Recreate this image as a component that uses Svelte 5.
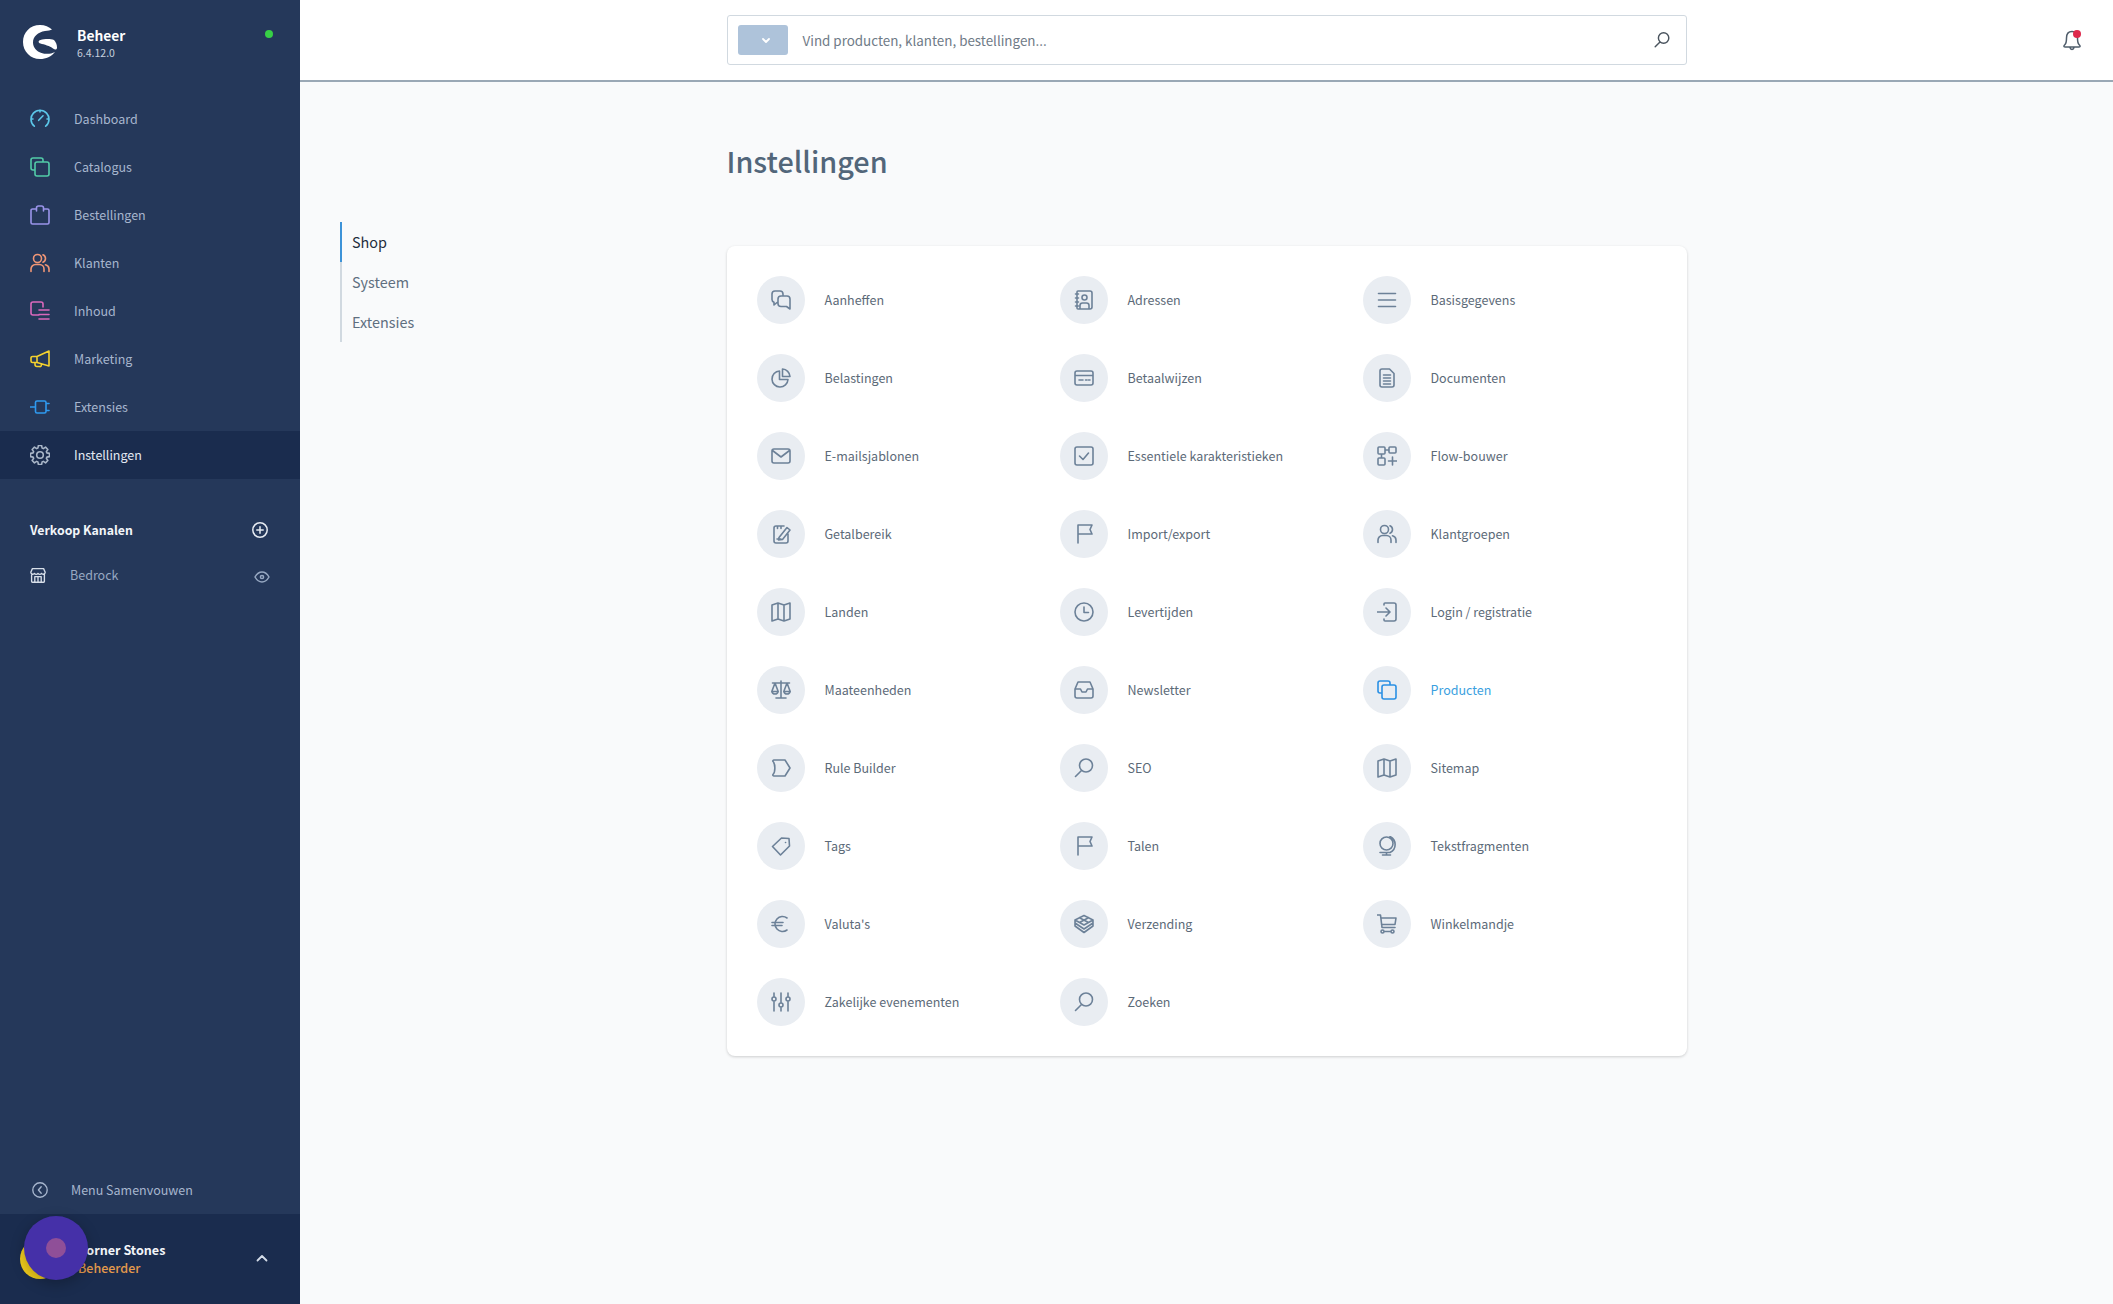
<script>
  // rounded-ish eight tooth gear outline, centre 10,10
  function gearOutline() {
    let d = "";
    for (let i = 0; i < 8; i++) {
      const a = (i * Math.PI) / 4 - Math.PI / 2;
      const pt = (r, off) => `${(10 + r * Math.cos(a + off)).toFixed(2)} ${(10 + r * Math.sin(a + off)).toFixed(2)}`;
      d += `${i === 0 ? "M" : "L"}${pt(7.2, -0.3)}L${pt(9.6, -0.17)}L${pt(9.6, 0.17)}L${pt(7.2, 0.3)}`;
    }
    return d + "zM10 13.300A3.300 3.300 0 1 0 10 6.700A3.300 3.300 0 0 0 10 13.300z";
  }

  const icons = {
    dashboard: "M4.300 17.200A9 9 0 1 1 15.700 17.200M10 1v2M1 10h2M17 10h2M8.700 11.300L13 6.800",
    catalog: "M13 5V3a2 2 0 0 0-2-2H3a2 2 0 0 0-2 2v8a2 2 0 0 0 2 2h2M7 5h10a2 2 0 0 1 2 2v10a2 2 0 0 1-2 2H7a2 2 0 0 1-2-2V7a2 2 0 0 1 2-2z",
    bag: "M6.500 4H2.500A1.500 1.500 0 0 0 1 5.500V17.500A1.500 1.500 0 0 0 2.500 19H17.500A1.500 1.500 0 0 0 19 17.500V5.500A1.500 1.500 0 0 0 17.500 4H13.500M6.500 6V3A2 2 0 0 1 8.500 1H11.500A2 2 0 0 1 13.500 3V6",
    users: "M7.500 9.500A4 4 0 1 0 7.500 1.500A4 4 0 0 0 7.500 9.500zM1 18.500V16A4.500 4.500 0 0 1 5.500 11.500H9.500A4.500 4.500 0 0 1 14 16V18.500M13 1.800A4 4 0 0 1 13 9.200M15.500 11.800A4.500 4.500 0 0 1 19 16V18.500",
    content: "M9 14H3a2 2 0 0 1-2-2V3a2 2 0 0 1 2-2h8a2 2 0 0 1 2 2v3M9 9h10M9 13.500h10M9 18h10",
    megaphone: "M19 2V17L7 13.500H2.500A1.500 1.500 0 0 1 1 12V9A1.500 1.500 0 0 1 2.500 7.500H7zM7 7.500V13.500M5 13.500V15.500A2 2 0 0 0 7 17.500H9.500A1.500 1.500 0 0 0 11 15",
    plug: "M7 4H14.500A1.500 1.500 0 0 1 16 5.500V14.500A1.500 1.500 0 0 1 14.500 16H7A1.500 1.500 0 0 1 5.500 14.500V5.500A1.500 1.500 0 0 1 7 4zM0.500 10H5.500M16 6.500H19M16 13.500H19",
    gear: gearOutline(),
    store: "M2 8V18A1 1 0 0 0 3 19H17A1 1 0 0 0 18 18V8M3 2H17L19 6.500A2.500 2.500 0 0 1 14.500 8A2.800 2.800 0 0 1 10 8A2.800 2.800 0 0 1 5.500 8A2.500 2.500 0 0 1 1 6.500zM6 19V12H14V19M10 12V19",
    plusCircle: "M10 19A9 9 0 1 0 10 1A9 9 0 0 0 10 19zM10 6V14M6 10H14",
    back: "M10 19A9 9 0 1 0 10 1A9 9 0 0 0 10 19zM11.500 6L8 10L11.500 14",
    chat: "M7 12.500H6L3 15V12.300A3 3 0 0 1 1 9.500V4A3 3 0 0 1 4 1H9A3 3 0 0 1 12 4V5M10 6H16A3 3 0 0 1 19 9V19L15.500 16.500H10A3 3 0 0 1 7 13.500V9A3 3 0 0 1 10 6z",
    book: "M4 1H16A2 2 0 0 1 18 3V17A2 2 0 0 1 16 19H4A1 1 0 0 1 3 18V2A1 1 0 0 1 4 1zM1.500 4H4.500M1.500 8H4.500M1.500 12H4.500M1.500 16H4.500M10.500 10A2.500 2.500 0 1 0 10.500 5A2.500 2.500 0 0 0 10.500 10zM6 19V15.500A2.500 2.500 0 0 1 8.500 13H12.500A2.500 2.500 0 0 1 15 15.500V19",
    lines: "M1.500 3.500H18.500M1.500 10H18.500M1.500 16.500H18.500",
    pie: "M8.500 3A8 8 0 1 0 17 11.500H8.500zM11.500 1A8 8 0 0 1 19 8.500H11.500z",
    card: "M3 3H17A2 2 0 0 1 19 5V15A2 2 0 0 1 17 17H3A2 2 0 0 1 1 15V5A2 2 0 0 1 3 3zM1 7.500H19M5 12H9M11.500 12H13M14.500 12H16",
    doc: "M5 1H12.500L17 5.500V17A2 2 0 0 1 15 19H5A2 2 0 0 1 3 17V3A2 2 0 0 1 5 1zM6.500 7H13.500M6.500 10H13.500M6.500 13H13.500M6.500 16H13.500",
    mail: "M3 3H17A2 2 0 0 1 19 5V15A2 2 0 0 1 17 17H3A2 2 0 0 1 1 15V5A2 2 0 0 1 3 3zM1.500 4.500L10 11L18.500 4.500",
    check: "M3 1H17A2 2 0 0 1 19 3V17A2 2 0 0 1 17 19H3A2 2 0 0 1 1 17V3A2 2 0 0 1 3 1zM5.500 10L9 13.500L14.500 7",
    flow: "M2 1H7A1 1 0 0 1 8 2V7A1 1 0 0 1 7 8H2A1 1 0 0 1 1 7V2A1 1 0 0 1 2 1zM13 1H18A1 1 0 0 1 19 2V6A1 1 0 0 1 18 7H13A1 1 0 0 1 12 6V2A1 1 0 0 1 13 1zM2 12H7A1 1 0 0 1 8 13V18A1 1 0 0 1 7 19H2A1 1 0 0 1 1 18V13A1 1 0 0 1 2 12zM8 4H12M4.500 8V12M15.500 11V19M11.500 15H19.500",
    note: "M13 2H5A2 2 0 0 0 3 4V17A2 2 0 0 0 5 19H15A2 2 0 0 0 17 17V10M6.500 2V4.500M10 2V4.500M8 13.500L16 3.500L19 6L11.500 15.500L7.500 16zM6 15H10",
    flag: "M4 19V1H18L16 5.500L18 10H4",
    map: "M1 3L7 1L13 3L19 1V17L13 19L7 17L1 19zM7 1V17M13 3V19",
    clock: "M10 19A9 9 0 1 0 10 1A9 9 0 0 0 10 19zM10 5V10.500H14.500",
    login: "M7 3V2A1 1 0 0 1 8 1H17A2 2 0 0 1 19 3V17A2 2 0 0 1 17 19H8A1 1 0 0 1 7 18V17M0.500 10H12.500M9 6L13 10L9 14",
    scales: "M10 1V18M5 18H15M1.500 3H18.500M4 3L0.800 11.500A3.300 3.300 0 0 0 7.200 11.500zM16 3L12.800 11.500A3.300 3.300 0 0 0 19.200 11.500zM1 11.500H7M13 11.500H19",
    inbox: "M4 2H16L19 9V16A2 2 0 0 1 17 18H3A2 2 0 0 1 1 16V9zM1 9H6.500L8 12H12L13.500 9H19",
    rule: "M3 2H14L19 10L14 18H3C2 18 1.500 17 2 16.500C4.500 14 4.500 6 2 3.500C1.500 3 2 2 3 2z",
    search: "M12 14A6.500 6.500 0 1 0 12 1A6.500 6.500 0 0 0 12 14zM7.500 12.500L1.500 18.500",
    tag: "M10.500 2L18 2.500L18.500 10L9.500 19L1.500 10.500zM14.500 6.500H14.600",
    globe: "M9.500 14A6.500 6.500 0 1 0 9.500 1A6.500 6.500 0 0 0 9.500 14zM13 0.500A8.800 8.800 0 0 1 13 16.500H3M9.500 16.500V19M5.500 19H13.500",
    euro: "M16 4A7.500 7.500 0 1 0 16 16M1 8.500H12M1 11.500H11",
    box: "M10 1.500L19 6V12L10 18.500L1 12V6zM1 6L10 11L19 6M5.500 3.700L14.500 8.500M14.500 3.700L5.500 8.500M1 9L10 15L19 9",
    cart: "M0.500 1H3.500L5 13.500H18M4 4H19L18 10.500H4.500M5.500 19A1.500 1.500 0 1 0 5.500 16A1.500 1.500 0 0 0 5.500 19zM15.500 19A1.500 1.500 0 1 0 15.500 16A1.500 1.500 0 0 0 15.500 19zM7 17.500H14",
    sliders: "M3 1V5M3 9V19M10 1V11M10 15V19M17 1V5M17 9V19M3 9A2 2 0 1 0 3 5A2 2 0 0 0 3 9zM10 15A2 2 0 1 0 10 11A2 2 0 0 0 10 15zM17 9A2 2 0 1 0 17 5A2 2 0 0 0 17 9z"
  };

  const menu = [
    { label: "Dashboard", icon: "dashboard", color: "#5cc8ea" },
    { label: "Catalogus", icon: "catalog", color: "#52cba8" },
    { label: "Bestellingen", icon: "bag", color: "#9a94ea" },
    { label: "Klanten", icon: "users", color: "#f09676" },
    { label: "Inhoud", icon: "content", color: "#da68bc" },
    { label: "Marketing", icon: "megaphone", color: "#f5d22e" },
    { label: "Extensies", icon: "plug", color: "#2f9af0" },
    { label: "Instellingen", icon: "gear", color: "#a9b6c8", active: true }
  ];

  const settings = [
    ["Aanheffen", "chat"], ["Adressen", "book"], ["Basisgegevens", "lines"],
    ["Belastingen", "pie"], ["Betaalwijzen", "card"], ["Documenten", "doc"],
    ["E-mailsjablonen", "mail"], ["Essentiele karakteristieken", "check"], ["Flow-bouwer", "flow"],
    ["Getalbereik", "note"], ["Import/export", "flag"], ["Klantgroepen", "users"],
    ["Landen", "map"], ["Levertijden", "clock"], ["Login / registratie", "login"],
    ["Maateenheden", "scales"], ["Newsletter", "inbox"], ["Producten", "catalog", true],
    ["Rule Builder", "rule"], ["SEO", "search"], ["Sitemap", "map"],
    ["Tags", "tag"], ["Talen", "flag"], ["Tekstfragmenten", "globe"],
    ["Valuta's", "euro"], ["Verzending", "box"], ["Winkelmandje", "cart"],
    ["Zakelijke evenementen", "sliders"], ["Zoeken", "search"]
  ];

  const tabs = ["Shop", "Systeem", "Extensies"];
</script>

<div class="page">
  <aside class="sidebar">
    <div class="brand">
      <svg class="logo" viewBox="0 0 34 34">
        <path d="M29 4.500C26 1.800 22 0 17 0C7 0 0 7.500 0 17C0 26.500 7.500 34 17 34C23 34 28.500 31.500 32 27C28 29 23 29.500 18.500 28C13.500 26.500 10 22.500 10 17.500C10 11.500 15 7 22 6C25 5.600 27.500 5.500 29 4.500zM17.500 15C15 15.500 15 18 17.500 18.500C21 19.500 27 21 30 23.500C32 25 34 25 34 22.500C34 20 33 17 31 15C27 13.500 21 14 17.500 15z"/>
      </svg>
      <div class="brand-text">
        <div class="brand-name">Beheer</div>
        <div class="brand-version">6.4.12.0</div>
      </div>
      <span class="status"></span>
    </div>

    <nav class="menu">
      {#each menu as item}
        <div class="menu-row" class:active={item.active}>
          <svg class="icon" viewBox="0 0 20 20" style="color: {item.color}"><path d={icons[item.icon]} /></svg>
          <span>{item.label}</span>
        </div>
      {/each}
    </nav>

    <div class="channels-head">
      <span>Verkoop Kanalen</span>
      <svg class="small-icon" viewBox="0 0 20 20"><path d={icons.plusCircle} /></svg>
    </div>
    <div class="channel">
      <svg class="small-icon" viewBox="0 0 20 20"><path d={icons.store} /></svg>
      <span class="channel-name">Bedrock</span>
      <svg class="eye" viewBox="0 0 16 12">
        <path d="M1 6C3 2.500 5.500 1 8 1C10.500 1 13 2.500 15 6C13 9.500 10.500 11 8 11C5.500 11 3 9.500 1 6z" />
        <circle cx="8" cy="6" r="1.600" />
      </svg>
    </div>

    <div class="collapse">
      <svg class="small-icon" viewBox="0 0 20 20"><path d={icons.back} /></svg>
      <span>Menu Samenvouwen</span>
    </div>
    <div class="user">
      <span class="avatar"></span>
      <div class="user-text">
        <div class="user-name">Corner Stones</div>
        <div class="user-role">Beheerder</div>
      </div>
      <svg class="caret" viewBox="0 0 12 8"><path d="M1.500 6.500L6 2L10.500 6.500" /></svg>
    </div>
    <div class="blob"><span></span></div>
  </aside>

  <div class="right">
    <header class="topbar">
      <div class="search">
        <span class="search-type">
          <svg viewBox="0 0 10 7"><path d="M2 2L5 5L8 2" /></svg>
        </span>
        <span class="placeholder">Vind producten, klanten, bestellingen...</span>
        <svg class="search-icon" viewBox="0 0 20 20"><path d={icons.search} /></svg>
      </div>
      <div class="bell-wrap">
        <svg class="bell" viewBox="0 0 24 24">
          <path d="M3 15.500C4.500 14 4.500 12 4.500 9C4.500 5 6.500 2.500 10 2.500C13.500 2.500 15.500 5 15.500 9C15.500 12 15.500 14 17 15.500C18.500 17 18.500 18 17 18H3C1.500 18 1.500 17 3 15.500zM8 18.500C8.500 21 11.500 21 12 18.500" />
          <circle cx="15" cy="5" r="4" />
        </svg>
      </div>
    </header>

    <main class="content">
      <ul class="tabs">
        {#each tabs as tab, i}
          <li class:current={i === 0}>{tab}</li>
        {/each}
      </ul>
      <div class="column">
        <h1>Instellingen</h1>
        <section class="card">
          {#each settings as [label, icon, highlighted]}
            <div class="setting" class:highlighted>
              <span class="bubble">
                <svg class="icon" viewBox="0 0 20 20"><path d={icons[icon]} /></svg>
              </span>
              <span>{label}</span>
            </div>
          {/each}
        </section>
      </div>
    </main>
  </div>
</div>

<style>
  :global(body) {
    margin: 0;
    font-family: "Noto Sans CJK SC", "Noto Sans", sans-serif;
  }

  .page {
    display: flex;
    height: 100vh;
    overflow: hidden;
    background: #f9fafb;
  }

  svg path, svg circle {
    fill: none;
    stroke: currentColor;
    stroke-linecap: round;
    stroke-linejoin: round;
  }

  .icon {
    width: 20px;
    height: 20px;
    flex: none;
    stroke-width: 1.6;
  }

  .sidebar {
    position: relative;
    width: 300px;
    flex: none;
    display: flex;
    flex-direction: column;
    background: #25385a;
    color: #a7b6ce;
    font-size: 12.5px;
    line-height: 20px;
  }

  .brand {
    height: 95px;
    flex: none;
    display: flex;
    align-items: flex-start;
    padding: 25px 0 0 23px;
    box-sizing: border-box;
  }

  .logo {
    width: 34px;
    height: 34px;
    flex: none;
  }

  .logo path {
    stroke: none;
    fill: #fff;
  }

  .brand-text {
    margin-left: 20px;
    margin-top: 1px;
  }

  .brand-name {
    font-size: 13.800px;
    font-weight: 700;
    color: #fff;
    line-height: 19px;
  }

  .brand-version {
    font-size: 10.500px;
    line-height: 16px;
    color: #c6cfdd;
  }

  .status {
    width: 8px;
    height: 8px;
    border-radius: 50%;
    background: #37d046;
    margin-left: auto;
    margin-right: 27px;
    margin-top: 5px;
  }

  .menu-row {
    display: flex;
    align-items: center;
    height: 48px;
    padding-left: 30px;
    gap: 24px;
  }

  .menu-row.active {
    background: #1a2c4e;
    color: #e3e9f2;
  }

  .channels-head {
    display: flex;
    align-items: center;
    justify-content: space-between;
    padding: 0 32px 0 30px;
    margin-top: 41px;
    height: 20px;
    font-size: 12.300px;
    font-weight: 700;
    color: #f2f5f9;
  }

  .channels-head .small-icon {
    color: #e6ebf2;
    stroke-width: 1.900;
  }

  .small-icon {
    width: 16px;
    height: 16px;
    flex: none;
    stroke-width: 1.700;
  }

  .channel {
    display: flex;
    align-items: center;
    padding: 0 30px;
    margin-top: 25px;
    height: 20px;
    color: #97a8c2;
  }

  .channel .small-icon {
    color: #d8dfe9;
  }

  .channel-name {
    margin-left: 24px;
  }

  .eye {
    width: 16px;
    height: 12px;
    margin-left: auto;
    margin-top: 4px;
    stroke-width: 1.500;
    color: #97a8c2;
  }

  .collapse {
    margin-top: auto;
    height: 48px;
    flex: none;
    display: flex;
    align-items: center;
    padding-left: 32px;
    gap: 23px;
  }

  .user {
    height: 90px;
    flex: none;
    box-sizing: border-box;
    display: flex;
    align-items: flex-start;
    padding: 25px 32px 0 20px;
    background: #1a2c4e;
  }

  .avatar {
    width: 40px;
    height: 40px;
    border-radius: 50%;
    background: #f0cc1c;
    flex: none;
  }

  .user-text {
    margin-left: 18px;
    margin-top: 2px;
  }

  .user-name {
    font-size: 12.600px;
    line-height: 18px;
    font-weight: 700;
    color: #f2f5f9;
  }

  .user-role {
    font-size: 12.500px;
    line-height: 17px;
    font-weight: 500;
    color: #e39a4c;
  }

  .caret {
    width: 12px;
    height: 8px;
    margin-left: auto;
    margin-top: 15px;
    color: #d4dce8;
    stroke-width: 1.800;
  }

  .blob {
    position: absolute;
    left: 24px;
    top: 1216px;
    width: 64px;
    height: 64px;
    border-radius: 50%;
    background: #4530a8;
    box-shadow: 0 4px 14px rgba(0, 0, 0, 0.25);
    display: flex;
    align-items: center;
    justify-content: center;
  }

  .blob span {
    width: 20px;
    height: 20px;
    border-radius: 50%;
    background: #8f4f98;
  }

  .right {
    flex: 1;
    min-width: 0;
  }

  .topbar {
    height: 80px;
    background: #fff;
    border-bottom: 2px solid #9aa8b5;
    display: grid;
    grid-template-columns: 1fr 960px 1fr;
    align-items: center;
  }

  .search {
    grid-column: 2;
    height: 50px;
    box-sizing: border-box;
    display: flex;
    align-items: center;
    border: 1px solid #d1d9e0;
    border-radius: 3px;
    padding: 0 16px 0 10px;
  }

  .search-type {
    width: 50px;
    height: 30px;
    border-radius: 3px;
    background: #aec3da;
    display: flex;
    align-items: center;
    justify-content: center;
  }

  .search-type svg {
    width: 10px;
    height: 7px;
    color: #fff;
    stroke-width: 1.800;
    margin-left: 6px;
  }

  .placeholder {
    margin-left: 15px;
    font-size: 13.400px;
    line-height: 20px;
    color: #6f7b87;
  }

  .search-icon {
    width: 16px;
    height: 16px;
    margin-left: auto;
    color: #4a545e;
    stroke-width: 1.800;
  }

  .bell-wrap {
    display: flex;
    justify-content: flex-end;
    padding-right: 27px;
  }

  .bell {
    width: 24px;
    height: 24px;
    color: #4f5d6b;
    stroke-width: 1.500;
    margin-top: 2px;
  }

  .bell circle {
    fill: #de294c;
    stroke: none;
  }

  .content {
    display: grid;
    grid-template-columns: 1fr 960px 1fr;
  }

  .tabs {
    list-style: none;
    margin: 140px 0 0 40px;
    padding: 0;
    font-size: 14.400px;
    line-height: 40px;
    color: #5f6f7f;
    border-left: 2px solid #d1d9e0;
    align-self: start;
  }

  .tabs li {
    padding-left: 10px;
    margin-left: -2px;
    border-left: 2px solid transparent;
  }

  .tabs .current {
    color: #1f2d3d;
    border-left-color: #3d93d8;
  }

  .column {
    padding-top: 60px;
  }

  h1 {
    margin: 0 0 64px;
    font-size: 28.800px;
    line-height: 38px;
    font-weight: 500;
    color: #52667a;
    padding-bottom: 2px;
  }

  .card {
    display: grid;
    grid-template-columns: repeat(3, 1fr);
    gap: 30px 9px;
    padding: 30px;
    background: #fff;
    border-radius: 8px;
    box-shadow: 0 1px 3px rgba(0, 0, 0, 0.18);
  }

  .setting {
    display: flex;
    align-items: center;
    gap: 20px;
    font-size: 12.500px;
    line-height: 20px;
    color: #5c6a78;
  }

  .bubble {
    width: 48px;
    height: 48px;
    border-radius: 50%;
    background: #e9edf2;
    color: #6c8198;
    display: flex;
    align-items: center;
    justify-content: center;
    flex: none;
  }

  .highlighted {
    color: #3b9fe0;
  }

  .highlighted .bubble {
    color: #2a90e4;
  }
</style>
